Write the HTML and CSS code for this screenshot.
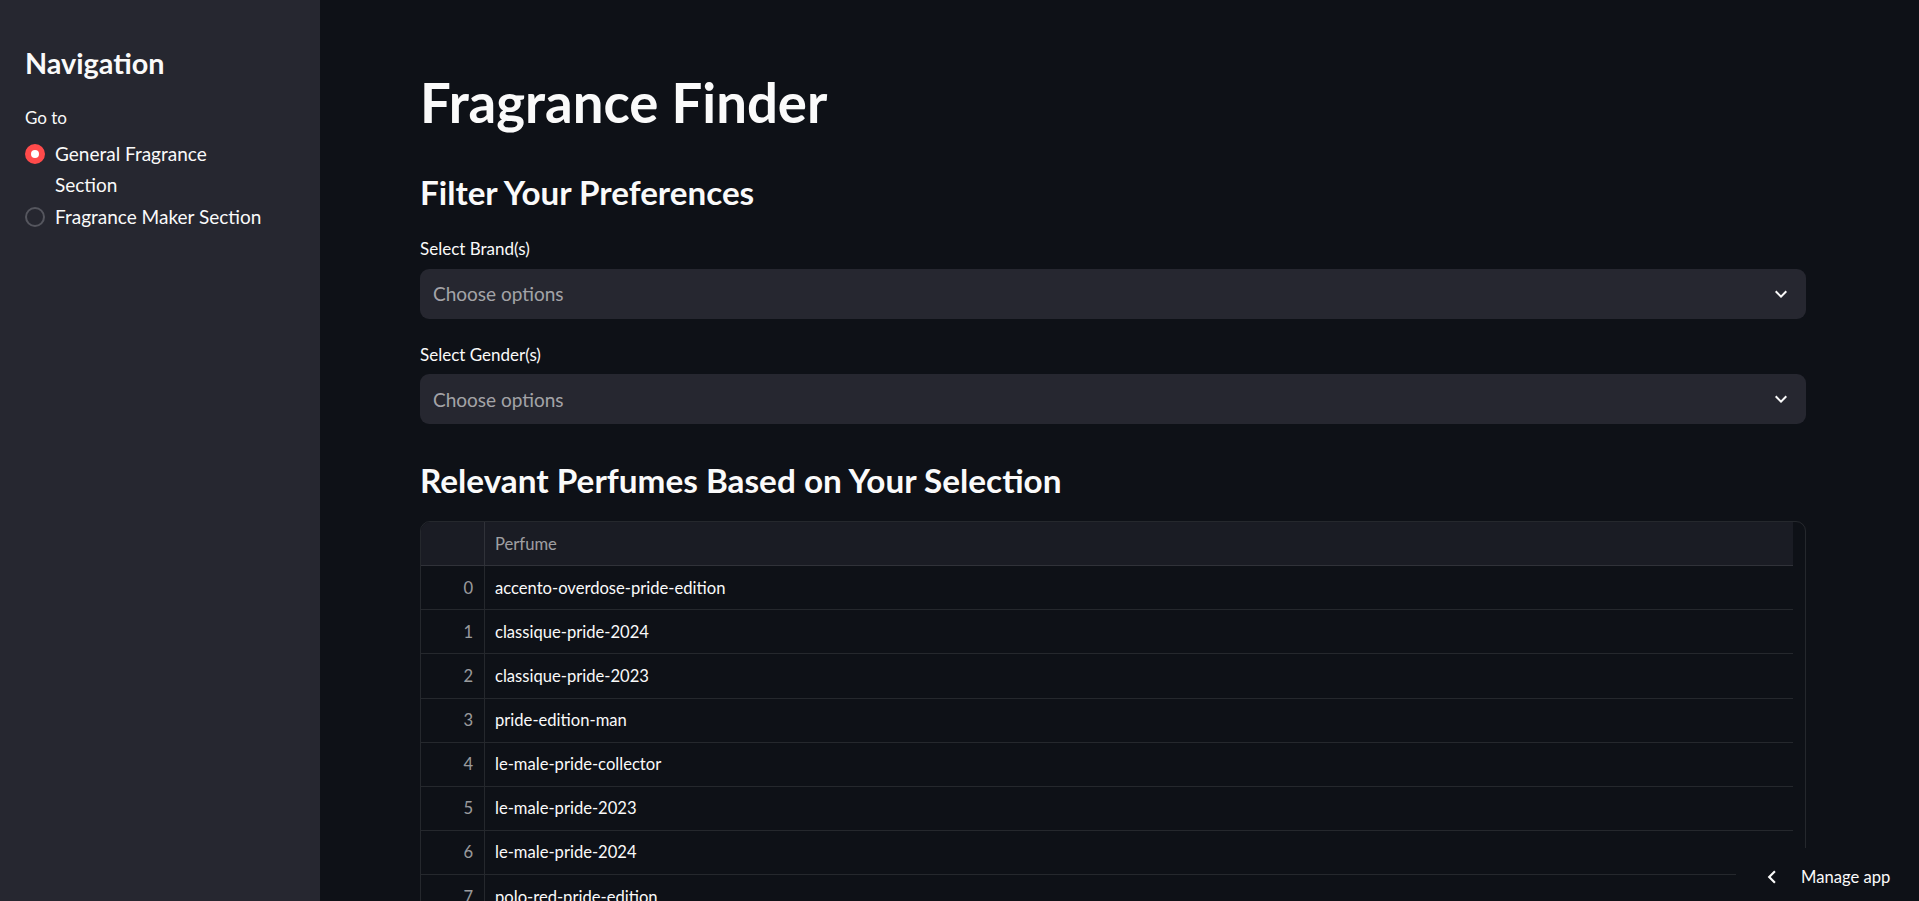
FILE: index.html
```html
<!DOCTYPE html>
<html lang="en">
<head>
<meta charset="utf-8">
<title>Fragrance Finder</title>
<link rel="stylesheet" href="styles.css">
</head>
<body>
<div class="app">
  <aside class="sidebar">
    <h2 class="nav-title">Navigation</h2>
    <div class="radio-caption">Go to</div>
    <div class="radio-options">
      <div class="radio checked">
        <span class="radio-mark"><span class="radio-dot"></span></span>
        <span class="radio-text">General Fragrance Section</span>
      </div>
      <div class="radio">
        <span class="radio-mark"></span>
        <span class="radio-text">Fragrance Maker Section</span>
      </div>
    </div>
  </aside>

  <main class="main">
    <div class="content">
      <h1 class="title">Fragrance Finder</h1>
      <h2 class="header filter-header">Filter Your Preferences</h2>

      <div class="field-label first-label">Select Brand(s)</div>
      <div class="select">
        <span class="placeholder">Choose options</span>
        <svg class="chevron" viewBox="0 0 24 24" width="24" height="24"><path d="M16.59 8.59L12 13.17 7.41 8.59 6 10l6 6 6-6z" fill="#fafafa"/></svg>
      </div>

      <div class="field-label second-label">Select Gender(s)</div>
      <div class="select">
        <span class="placeholder">Choose options</span>
        <svg class="chevron" viewBox="0 0 24 24" width="24" height="24"><path d="M16.59 8.59L12 13.17 7.41 8.59 6 10l6 6 6-6z" fill="#fafafa"/></svg>
      </div>

      <h2 class="header results-header">Relevant Perfumes Based on Your Selection</h2>

      <div class="table">
        <div class="grid">
          <div class="row head">
            <div class="cell idx"></div>
            <div class="cell val">Perfume</div>
          </div>
          <div class="row"><div class="cell idx">0</div><div class="cell val">accento-overdose-pride-edition</div></div>
          <div class="row"><div class="cell idx">1</div><div class="cell val">classique-pride-2024</div></div>
          <div class="row"><div class="cell idx">2</div><div class="cell val">classique-pride-2023</div></div>
          <div class="row"><div class="cell idx">3</div><div class="cell val">pride-edition-man</div></div>
          <div class="row"><div class="cell idx">4</div><div class="cell val">le-male-pride-collector</div></div>
          <div class="row"><div class="cell idx">5</div><div class="cell val">le-male-pride-2023</div></div>
          <div class="row"><div class="cell idx">6</div><div class="cell val">le-male-pride-2024</div></div>
          <div class="row"><div class="cell idx">7</div><div class="cell val">polo-red-pride-edition</div></div>
        </div>
      </div>
    </div>
  </main>
</div>

<div class="manage-app">
  <svg class="manage-chevron" viewBox="0 0 24 24" width="26" height="26"><path d="M15.41 7.41L14 6l-6 6 6 6 1.41-1.41L10.83 12z" fill="#fafafa"/></svg>
  <span class="manage-text">Manage app</span>
</div>
</body>
</html>
```

FILE: styles.css
```css
* { box-sizing: border-box; }

html, body {
  margin: 0;
  padding: 0;
  height: 100%;
  overflow: hidden;
  background: #0e1117;
  color: #fafafa;
  font-family: "Lato", "Noto Sans", sans-serif;
}

.app {
  display: flex;
  height: 901px;
  overflow: hidden;
}

/* Sidebar */
.sidebar {
  width: 320px;
  flex: 0 0 320px;
  background: #262730;
  padding: 45.6px 25px 0 25px;
}

.nav-title {
  margin: 0;
  font-size: 28.8px;
  line-height: 1.2;
  font-weight: 700;
}

.radio-caption {
  margin-top: 28.2px;
  font-size: 17px;
  line-height: 1.2;
}

.radio-options {
  margin-top: 8.8px;
  display: flex;
  flex-direction: column;
}

.radio {
  display: flex;
  align-items: flex-start;
  gap: 10px;
}

.radio-mark {
  flex: 0 0 20px;
  width: 20px;
  height: 20px;
  margin-top: 6.3px;
  border-radius: 50%;
  border: 2px solid #55565e;
  display: flex;
  align-items: center;
  justify-content: center;
}

.radio.checked .radio-mark {
  background: #ff4b4b;
  border-color: #ff4b4b;
}

.radio-dot {
  width: 8px;
  height: 8px;
  border-radius: 50%;
  background: #ffffff;
}

.radio-text {
  max-width: 210px;
  font-size: 19px;
  line-height: 31.8px;
}

/* Main */
.main {
  flex: 1;
  padding: 70.4px 0 0 100px;
}

.content {
  width: 1386px;
}

.title {
  margin: 0;
  font-size: 54.5px;
  line-height: 1.2;
  font-weight: 700;
}

.header {
  margin: 0;
  line-height: 1.2;
  font-weight: 700;
}

.filter-header { margin-top: 37.6px; font-size: 33.2px; }
.results-header { margin-top: 36.5px; font-size: 33.3px; }

.field-label {
  font-size: 17px;
  line-height: 1.2;
}

.first-label { margin-top: 26.1px; }
.second-label { margin-top: 25.9px; }

.select {
  margin-top: 9.2px;
  height: 50px;
  background: #262730;
  border-radius: 9px;
  display: flex;
  align-items: center;
  justify-content: space-between;
  padding: 0 13px 0 13px;
}

.placeholder {
  font-size: 19px;
  color: rgba(250, 250, 250, 0.6);
}

.chevron { display: block; }

/* Table */
.table {
  margin-top: 20.4px;
  border: 1px solid rgba(250, 250, 250, 0.1);
  border-radius: 10px;
  height: 500px;
  overflow: hidden;
  padding-right: 12px;
}

.grid {
  display: flex;
  flex-direction: column;
}

.row {
  display: grid;
  grid-template-columns: 64px 1fr;
  height: 44.1px;
  border-bottom: 1px solid rgba(250, 250, 250, 0.1);
  font-size: 16.6px;
}

.row.head {
  background: #1a1c24;
}

.cell {
  display: flex;
  align-items: center;
}

.cell.idx {
  justify-content: flex-end;
  padding-right: 11px;
  color: rgba(250, 250, 250, 0.6);
  border-right: 1px solid rgba(250, 250, 250, 0.1);
}

.cell.val {
  padding-left: 10px;
}

.row.head .cell.val {
  color: rgba(250, 250, 250, 0.6);
}

/* Manage app overlay */
.manage-app {
  position: fixed;
  right: 0;
  bottom: 0;
  width: 183px;
  height: 53px;
  background: #0e1117;
  display: flex;
  align-items: center;
  padding-left: 23px;
  padding-top: 4px;
  gap: 16px;
}

.manage-chevron { display: block; }

.manage-text {
  font-size: 16.6px;
}
```
